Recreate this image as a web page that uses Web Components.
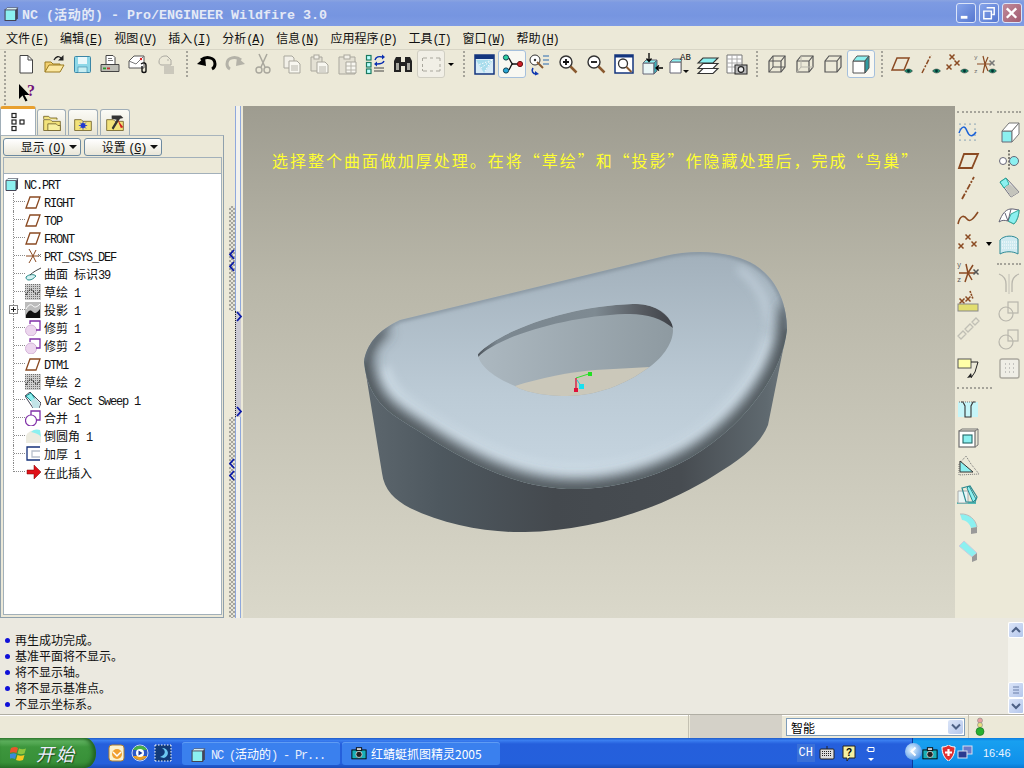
<!DOCTYPE html>
<html lang="zh-CN">
<head>
<meta charset="utf-8">
<title>NC (活动的) - Pro/ENGINEER Wildfire 3.0</title>
<style>
  html, body { margin: 0; padding: 0; background: #ece9d8; overflow: hidden; }
  body { font: 12px "Liberation Mono", "Noto Sans CJK SC", monospace; color: #000; }
</style>
</head>
<body>
<pe-app></pe-app>
<script>
const BR = "#8a4a22"; // datum brown
const CY = "#8cf0f0"; // part cyan
const eye = `<path d="M14.500 19c2-2.600 6-2.600 8 0c-2 2.600-6 2.600-8 0z" fill="#1d8a6a" stroke="#444" stroke-width=".6"/><circle cx="18.500" cy="19" r="1.400" fill="#033"/>`;
const xm = (x, y, c = BR) => `<path d="M${x - 2.500} ${y - 2.500}l5 5m0-5l-5 5" stroke="${c}" stroke-width="1.500" fill="none"/>`;
const lens = (inner = "") => `<circle cx="10" cy="10" r="6" fill="#fff" stroke="#333" stroke-width="1.400"/>${inner}<path d="M14.500 14.500l6 6" stroke="#8a5a30" stroke-width="2.500"/>`;
const cube = (s, d = "") => `<path d="M4 9l4-5h12v11l-4 5H4z" fill="none" stroke="${s}" stroke-width="1.200"/><path d="M4 9h12v11M16 9l4-5" fill="none" stroke="${s}" stroke-width="1.200"/>${d}`;

const ICONS = {
  new: `<path d="M6 3.500h8l4.500 4.500v13H6z" fill="#fff" stroke="#444"/><path d="M14 3.500V8h4.500" fill="none" stroke="#444"/>`,
  open: `<path d="M3 20V10h6l2 2h7v2" fill="#f2d070" stroke="#9a7a20"/><path d="M3 20l4-7h15l-4 7z" fill="#fbe7a0" stroke="#9a7a20"/><path d="M12 8c2-4 5-4 7-2" fill="none" stroke="#222" stroke-width="1.300"/><path d="M21.500 3v5.500H16z" fill="#222"/>`,
  save: `<rect x="4.500" y="4.500" width="16" height="16" rx="1" fill="#8fd8e8" stroke="#3b86a6"/><rect x="8" y="5" width="9" height="7" fill="#eaf8fb"/><rect x="8" y="15" width="9" height="5.500" fill="#c8eef2" stroke="#3b86a6" stroke-width=".6"/>`,
  print: `<path d="M8 12V3.500h7l2 2V12" fill="#fff" stroke="#444"/><path d="M10 6.500h4M10 8.500h5" stroke="#777"/><path d="M3 12.500h18v7H3z" fill="#bdbdb5" stroke="#444"/><rect x="5" y="15.500" width="3" height="1.800" fill="#2a9a2a"/><rect x="9" y="15.500" width="3" height="1.800" fill="#c03030"/>`,
  mail: `<path d="M3 9l5-5h10v12H3z" fill="#fff" stroke="#555"/><path d="M3 9l7 3 8-8" fill="none" stroke="#777"/><circle cx="15" cy="7" r="1.200" fill="#d22"/><path d="M15 12c3-2 5-1 5 1v6c0 2-4 2-4 0v-5" fill="none" stroke="#111" stroke-width="1.400"/>`,
  maildis: `<path d="M5 10c0-4 3-6 6-6h2l4 4v5H8c-2 0-3-1-3-3z" fill="none" stroke="#aaa8a0"/><circle cx="14" cy="8" r="1" fill="#c9c6ba"/><path d="M10 16h10M10 20h10" stroke="#aaa8a0" stroke-width="3"/><path d="M10 16h10M10 20h10" stroke="#ece9d8"/>`,
  undo: `<path d="M6 8c5-4 14-3 14 4 0 2-1 4-3 5" fill="none" stroke="#000" stroke-width="3"/><path d="M2 12l9 2-1-9z" fill="#000"/>`,
  redo: `<path d="M18 8c-5-4-14-3-14 4 0 2 1 4 3 5" fill="none" stroke="#b4b2a8" stroke-width="3"/><path d="M22 12l-9 2 1-9z" fill="#b4b2a8"/>`,
  cut: `<path d="M8 2l6 13M16 2l-6 13" stroke="#a9a79d" stroke-width="1.500"/><circle cx="8" cy="18" r="3" fill="none" stroke="#a9a79d" stroke-width="1.400"/><circle cx="16" cy="18" r="3" fill="none" stroke="#a9a79d" stroke-width="1.400"/>`,
  copy: `<path d="M5 4h8l2 2v10H5z" fill="#f2f0e8" stroke="#a9a79d"/><path d="M10 9h8l3 3v9H10z" fill="#f8f7f0" stroke="#a9a79d"/><path d="M12 14h7M12 16h7M12 18h7" stroke="#b8b6ac"/>`,
  paste: `<path d="M4 5h11v14H4z" fill="#e4e1d4" stroke="#a9a79d"/><rect x="7" y="3" width="5" height="4" fill="#f2f0e8" stroke="#a9a79d"/><path d="M10 10h8l3 3v8H10z" fill="#f8f7f0" stroke="#a9a79d"/><path d="M12 15h7M12 17h7M12 19h7" stroke="#b8b6ac"/>`,
  pastesp: `<path d="M4 5h16v17H4z" fill="#e4e1d4" stroke="#a9a79d"/><rect x="9" y="3" width="6" height="4" fill="#f2f0e8" stroke="#a9a79d"/><path d="M11 10h10v11H11z" fill="#f8f7f0" stroke="#a9a79d"/><path d="M11 14h10M11 18h10M16 10v11" stroke="#b8b6ac"/>`,
  regen: `<g fill="#bff" stroke="#1c7a60" stroke-width="1.200"><rect x="3.500" y="3.500" width="4.500" height="4.500"/><rect x="3.500" y="10.500" width="4.500" height="4.500"/><rect x="3.500" y="17" width="4.500" height="4.500"/></g><path d="M12 8c1-3 4-4 7-3" fill="none" stroke="#0a2fb0" stroke-width="1.400"/><path d="M19 2.500l3 2.500-3 2.500z" fill="#0a2fb0"/><path d="M21 9c-1 3-4 3-7 3" fill="none" stroke="#0a2fb0" stroke-width="1.400"/><path d="M14 9.500l-3 2.500 3 2.500z" fill="#0a2fb0"/><path d="M11 16h10M11 19h10" stroke="#444"/>`,
  find: `<path d="M3 9l2-4h5v5h4V5h5l2 4v11h-7v-6h-4v6H3z" fill="#222"/><path d="M5 11h3v7H5zM16 11h3v7h-3z" fill="#a8a8a0"/>`,
  select: `<path d="M4 6h4M11 6h3M17 6h4M21 6v3M21 12v3M21 17v2M4 19h4M11 19h3M17 19h4M3.500 6v3M3.500 12v3M3.500 17v2" stroke="#a9a79d" fill="none"/>`,
  repaint: `<rect x="3" y="3" width="19" height="19" fill="#d8ecf8" stroke="#13357e" stroke-width="1.500"/><rect x="3" y="3" width="19" height="4" fill="#13357e"/><path d="M4 8h17L12 21z" fill="#a8dcec"/><path d="M20 8L9 16M20 8l-7 11M20 8L6 13" stroke="#fff" stroke-dasharray="1.500 1.500" fill="none"/>`,
  axis: `<path d="M7 5.500c4 0 3 6.500 6 6.500c-3 0-2 6.500-6 6.500M13 12h7" fill="none" stroke="#111" stroke-width="1.300"/><circle cx="6" cy="5.500" r="2.600" fill="#2fd0a0" stroke="#145"/><circle cx="6" cy="18.500" r="2.600" fill="#2aa8d8" stroke="#145"/><circle cx="20" cy="12" r="2.600" fill="#d02028" stroke="#611"/>`,
  spin: `<circle cx="7" cy="8" r="5" fill="#fff" stroke="#333"/><circle cx="7" cy="8" r="1.200" fill="#333"/><path d="M9 10l6 6" stroke="#8a5a30" stroke-width="2"/><path d="M15 4h6M15 8h6M15 12h6" stroke="#2a6ab0"/><path d="M5 16c-2 3 0 6 3 6" fill="none" stroke="#1038b0" stroke-width="1.600"/><path d="M7 19l4 3-4 1.500z" fill="#1038b0"/>`,
  zoomin: lens(`<path d="M7 10h6M10 7v6" stroke="#111" stroke-width="1.800"/>`),
  zoomout: lens(`<path d="M7 10h6" stroke="#111" stroke-width="1.800"/>`),
  refit: `<rect x="3" y="3" width="18" height="18" fill="#fff" stroke="#13357e" stroke-width="1.500"/><rect x="3" y="3" width="18" height="2.500" fill="#13357e"/><circle cx="11" cy="11.500" r="4.500" fill="#fff" stroke="#333" stroke-width="1.300"/><path d="M14.500 15l5 5" stroke="#8a5a30" stroke-width="2"/>`,
  orient: `<path d="M3 11h11v11H3z" fill="#eaf6f6" stroke="#667"/><path d="M3 11l3-3h11l-3 3z" fill="${CY}" stroke="#667"/><path d="M14 11l3-3v11l-3 3z" fill="#3ab0b8" stroke="#667"/><path d="M9 1v8M6.500 6.500L9 9.500l2.500-3" fill="none" stroke="#000" stroke-width="1.300"/><path d="M23 16h-7M19 13.500L16 16l3 2.500" fill="none" stroke="#000" stroke-width="1.300"/>`,
  views: `<path d="M2 10h11v11H2z" fill="#fff" stroke="#667"/><path d="M2 10l3-3h9l-1 3z" fill="${CY}" stroke="#667"/><path d="M13 10l1-3v11l-1 3z" fill="#8a8a82"/><text x="12" y="8" font-family="Liberation Mono" font-size="9" fill="#111">AB</text><path d="M15 18h6l-3 3z" fill="#111"/>`,
  layers: `<g stroke="#333" stroke-width="1.100"><path d="M7 16.500h15l-5 5H2z" fill="#fff"/><path d="M7 11.500h15l-5 5H2z" fill="#fff"/><path d="M7 6h15l-5 5H2z" fill="${CY}"/></g>`,
  image: `<path d="M3 3h15v18H3z" fill="#fff" stroke="#777"/><path d="M3 7h15M3 11h15M3 15h15M8 3v18M13 3v18" stroke="#aaa"/><rect x="11" y="13" width="12" height="9" fill="#bbb" stroke="#222"/><circle cx="17" cy="17.500" r="2.800" fill="#eee" stroke="#222" stroke-width="1.200"/>`,
  wire: cube("#555", `<path d="M8 4v11h12M8 15l-4 5" fill="none" stroke="#555"/>`),
  hidden: cube("#555", `<path d="M8 4v11h12M8 15l-4 5" fill="none" stroke="#b8b6ac"/>`),
  nohidden: cube("#555"),
  shaded: `<path d="M4 9h12v12H4z" fill="#fff" stroke="#555"/><path d="M4 9l4-5h12l-4 5z" fill="${CY}" stroke="#555"/><path d="M16 9l4-5v12l-4 5z" fill="#2f9aa0" stroke="#555"/>`,
  planeeye: `<path d="M2 18L7 6h12l-5 12z" fill="none" stroke="${BR}" stroke-width="1.500"/>${eye}`,
  axiseye: `<path d="M4 21L13 3" stroke="${BR}" stroke-width="1.500" stroke-dasharray="5 1.500 2 1.500"/>${eye}`,
  pointeye: xm(6, 5) + xm(3, 15) + xm(11, 11) + eye,
  csyseye: `<path d="M3 12h14M9 4l2 8-2 9M14 5l-3 7 3 7" stroke="${BR}" stroke-width="1.200" fill="none"/><text x="0" y="7" font-size="6" font-family="Liberation Mono" fill="#666">y</text><text x="0" y="21" font-size="6" font-family="Liberation Mono" fill="#666">z</text>${xm(18, 11, "#777")}${eye}`,
  help: `<path d="M5 4v15l3.500-3.500 3 6 2-1-3-5.500h5z" fill="#000"/><text x="13" y="16" font-family="Liberation Serif" font-weight="700" font-size="16" fill="#70107a">?</text>`,

  sketchfit: `<g fill="#15508c"><circle cx="4" cy="4" r=".6"/><circle cx="9" cy="4" r=".6"/><circle cx="14" cy="4" r=".6"/><circle cx="19" cy="4" r=".6"/><circle cx="4" cy="20" r=".6"/><circle cx="9" cy="20" r=".6"/><circle cx="14" cy="20" r=".6"/><circle cx="19" cy="20" r=".6"/><circle cx="4" cy="9" r=".6"/><circle cx="19" cy="9" r=".6"/><circle cx="4" cy="15" r=".6"/><circle cx="19" cy="15" r=".6"/></g><path d="M3 13c3-8 6-7 8-2s5 7 9 1" fill="none" stroke="#1b62d8" stroke-width="1.500"/>`,
  extrude: `<path d="M5 11h10v11H5z" fill="${CY}" stroke="#667"/><path d="M5 11l7-8h10L15 11z" fill="#fff" stroke="#777"/><path d="M15 11l7-8v11l-7 8z" fill="#fff" stroke="#777"/>`,
  plane: `<path d="M3 20l5-14h14l-6 14z" fill="none" stroke="${BR}" stroke-width="1.800"/>`,
  revolve: `<path d="M12 2v20" stroke="#111" stroke-dasharray="2 1.500"/><circle cx="6" cy="13" r="3.500" fill="#fff" stroke="#667"/><circle cx="17" cy="13" r="4.500" fill="${CY}" stroke="#667"/>`,
  axisl: `<path d="M6 23L18 1" stroke="${BR}" stroke-width="1.800" stroke-dasharray="6 1.500 2 1.500"/>`,
  sweep: `<path d="M3 6l6-4 13 14-8 5z" fill="#fff" stroke="#667"/><path d="M3 6l6-4 3 6-5 4z" fill="${CY}" stroke="#2a9"/><path d="M8 11l5-3 9 8-8 5z" fill="#c4c4bc"/>`,
  curve: `<path d="M2 20c2-9 6-9 9-5s7-1 11-7" fill="none" stroke="${BR}" stroke-width="1.600"/>`,
  blend: `<path d="M2 18c3-8 7-14 14-13l6 1c0 5-2 11-5 14l-6-3c-4-1-6-1-9 1z" fill="#fff" stroke="#667"/><path d="M11 17l3-7 8-4c0 5-2 11-5 14z" fill="${CY}" stroke="#3a9"/><path d="M8 9l3 8M14 5l-3 12" stroke="#667" fill="none"/>`,
  points: xm(12, 5) + xm(5, 14) + xm(18, 12),
  surface: `<path d="M3 22V8c4-5 14-5 18-1v15c-5-3-13-3-18 0z" fill="#cfeaf0" stroke="#2f8a96"/><path d="M5 10h15M5 13h15M5 16h15" stroke="#fff" stroke-dasharray="1 1"/>`,
  csys: `<path d="M3 13h16M10 4l2 9-3 9M17 5l-5 8 4 7" stroke="${BR}" stroke-width="1.500" fill="none"/><text x="1" y="7" font-size="7" font-family="Liberation Mono" fill="#555">y</text><text x="1" y="22" font-size="7" font-family="Liberation Mono" fill="#555">z</text>${xm(20, 12, "#555")}`,
  mirror: `<path d="M12 2v20" stroke="#c4c2b8"/><path d="M2 2c5 2 7 6 7 10v8M22 2c-5 2-7 6-7 10v8" fill="none" stroke="#b8b6ac" stroke-width="1.300"/>`,
  ptfeat: xm(6, 13) + `<path d="M14 3l3 8" stroke="${BR}" stroke-width="1.600" stroke-dasharray="2 1"/>${xm(12, 11)}<rect x="2" y="16" width="20" height="7" fill="#e2de70" stroke="#888"/>`,
  merge: `<rect x="11" y="2" width="10" height="11" fill="none" stroke="#b8b6ac" stroke-width="1.200"/><circle cx="9" cy="14" r="7" fill="none" stroke="#b8b6ac" stroke-width="1.200"/>`,
  chain: `<path d="M2 20l5-5 3 3-5 5zM9 13l5-5 3 3-5 5zM16 6l4-4 3 3-4 4z" fill="none" stroke="#c0bfb5" stroke-width="1.300"/>`,
  note: `<rect x="2" y="3" width="13" height="9" fill="#ffffa8" stroke="#555"/><path d="M15 6h7l-3 10-4 6" fill="none" stroke="#222"/><path d="M11 22l4-5 1 4z" fill="#222"/>`,
  pattern: `<rect x="3" y="3" width="19" height="19" rx="2" fill="#efeee6" stroke="#aaa89e" stroke-width="1.400"/><path d="M8 8h1M12 8h1M16 8h1M8 12h1M12 12h1M16 12h1M8 16h1M12 16h1M16 16h1" stroke="#999"/>`,
  hole: `<rect x="2" y="4" width="20" height="15" fill="#c6f5f8"/><path d="M5 4h2l2 4v11h6V8l2-4h2" fill="none" stroke="#333" stroke-width="1.100"/><path d="M3 4h18" stroke="#777" stroke-dasharray="1 1"/>`,
  shell: `<rect x="3" y="5" width="16" height="16" fill="#fff" stroke="#777" stroke-width="1.300"/><path d="M3 5l3-2h16l-3 2M22 3v16l-3 2" fill="none" stroke="#777"/><rect x="7" y="9" width="9" height="8" fill="${CY}" stroke="#266" stroke-width="1.100"/>`,
  rib: `<path d="M3 21V10l7-8 5 8 8 10z" fill="none" stroke="#777" stroke-dasharray="1 1"/><path d="M4 18V7l13 11z" fill="${CY}" stroke="#333"/>`,
  draft: `<path d="M1 21h19" stroke="#2aa" stroke-width="1.500"/><path d="M2 9h10v12H2z" fill="#e8f6f6" stroke="#aaa"/><path d="M6 6l8-2 7 11-2 5H10z" fill="none" stroke="#2a8a90" stroke-width="1.200"/><path d="M13 4l7 13-3 3-6-14z" fill="${CY}" stroke="#2a8a90"/>`,
  round: `<path d="M4 4c9-1 16 6 17 13l-6 1c-1-4-5-8-9-8z" fill="${CY}"/><path d="M15 18l6-1v6l-6 1z" fill="#999"/><path d="M4 4c9-1 16 6 17 13" fill="none" stroke="#bbb"/>`,
  chamfer: `<path d="M8 3l13 12-5 4L3 8z" fill="${CY}" stroke="#ccd"/><path d="M16 19l5-4v7l-5 2z" fill="#999"/>`,

  root: `<path d="M1 4.500h10v10H1z" fill="${CY}" stroke="#445" stroke-width="1"/><path d="M11 4.500l2-2v10l-2 2z" fill="#445"/><path d="M1 4.500l2-2h10l-2 2z" fill="#e8ffff" stroke="#445" stroke-width=".6"/>`,
  tplane: `<path d="M1 14L5 3h10l-4 11z" fill="none" stroke="${BR}" stroke-width="1.300"/>`,
  tcsys: `<path d="M1 8h13M4 1l4 7-4 7M11 2L8 8l3 6" stroke="${BR}" fill="none"/><path d="M13 6l3 3m0-3l-3 3" stroke="#777"/>`,
  tsurf: `<path d="M1 11c3-3 8-3 10-1-2 2-4 4-7 4-2 0-3-1-3-3z" fill="#d4f2f2" stroke="#2a8a8a"/><path d="M5 9C8 6 12 4 16 2" fill="none" stroke="#444"/>`,
  tsketch: `<rect width="16" height="16" fill="#cfcfcf"/><path d="M0 .5h16M0 2.500h16M0 4.500h16M0 6.500h16M0 8.500h16M0 10.500h16M0 12.500h16M0 14.500h16" stroke="#6e6e6e" stroke-dasharray="1 1"/><path d="M1 11c3-6 5-7 8-3s4 2 6-2" fill="none" stroke="#111" stroke-dasharray="1.500 1"/>`,
  tproj: `<rect width="16" height="16" fill="#bbb"/><path d="M1 13c3-6 5-5 7-3s4 1 7-3v9H1z" fill="#111"/><path d="M1 7c3-5 5-5 7-3s4 1 7-2" fill="none" stroke="#fff"/>`,
  ttrim: `<circle cx="6" cy="10.500" r="5.500" fill="#ecd6ee" stroke="#d4b4d8"/><path d="M5 4V1h10v9H11" fill="none" stroke="#8030a8" stroke-width="1.300"/>`,
  tsweep: `<path d="M0 4l5-4 11 11-2 5H8z" fill="#fff" stroke="#445"/><path d="M1 4l5-3 4 6-3 3z" fill="${CY}" stroke="#1a8a8a"/><path d="M6 9l4-3 5 5-1 5H8z" fill="#c2e4e8"/>`,
  tmerge: `<circle cx="6" cy="10.500" r="5.500" fill="#fff" stroke="#8030a8" stroke-width="1.200"/><path d="M6 5V1h9v9h-4" fill="none" stroke="#8030a8" stroke-width="1.300"/>`,
  tround: `<path d="M1 15V8c2-5 8-7 14-6l1 7v6z" fill="#ecebe0"/><path d="M6 4c3-3 6-3 9-2l1 7c-2-3-6-4-10-5z" fill="${CY}"/>`,
  tthick: `<path d="M15 1H2v13h13" fill="none" stroke="#14307a" stroke-width="1.300"/><path d="M15 5H7v6h8" fill="none" stroke="#b8c0cc" stroke-width="1.300"/>`,
  tinsert: `<path d="M2 6h7V1l7 7-7 7v-5H2z" fill="#e01018" stroke="#700" stroke-width=".5"/>`,
};

function icon(name, size = 24, box = 24) {
  return `<svg width="${size}" height="${size}" viewBox="0 0 ${box} ${box}" style="display:block">${ICONS[name] || ""}</svg>`;
}

// latin in a squeezed run so it keeps the 6px cell next to 12px CJK
function mixed(text) {
  return text.replace(/[\x20-\x7e]+/g, (m) => `<span class="l">${m.replace(/&/g, "&amp;")}</span>`);
}
const MIXED_CSS = `.l { font: 12px "Liberation Mono", monospace; letter-spacing: -1.200px; white-space: pre; }`;

class Base extends HTMLElement {
  constructor() {
    super();
    this.attachShadow({ mode: "open" });
  }
}

class PeApp extends Base {
  connectedCallback() {
    this.shadowRoot.innerHTML = `
      <style>
        :host { display: flex; flex-direction: column; width: 1024px; height: 768px; overflow: hidden; background: #ece9d8; }
        .main { display: flex; height: 512px; }
      </style>
      <pe-titlebar></pe-titlebar>
      <pe-menubar></pe-menubar>
      <pe-toolbar></pe-toolbar>
      <div class="main">
        <pe-sidebar></pe-sidebar>
        <pe-sash></pe-sash>
        <pe-canvas></pe-canvas>
        <pe-righttools></pe-righttools>
      </div>
      <pe-messages></pe-messages>
      <pe-status></pe-status>
      <pe-taskbar></pe-taskbar>`;
  }
}

class PeTitlebar extends Base {
  connectedCallback() {
    const btn = (cls, svg) => `<div class="wb ${cls}"><svg width="19" height="19" viewBox="0 0 19 19">${svg}</svg></div>`;
    this.shadowRoot.innerHTML = `
      <style>
        :host { display: flex; align-items: center; height: 26px; box-sizing: border-box; padding: 0 2px 0 4px;
          background: linear-gradient(#8aa3e0 0, #7d9ae2 10%, #7695e0 60%, #7f9ce4 100%); }
        .ic { margin-right: 2px; }
        .t { flex: 1; color: #e4e9f6; font: bold 13.333px "Liberation Mono", monospace; white-space: pre; }
        .t b { font: bold 13px "Noto Sans CJK SC", sans-serif; letter-spacing: .7px; }
        .wb { width: 20px; height: 20px; border-radius: 3px; border: 1px solid #dbe4f8; box-sizing: border-box; margin-left: 3px; display: flex; }
        .min, .max { background: linear-gradient(135deg, #86a4ea, #5577d0); }
        .close { background: linear-gradient(135deg, #c08a9a, #a25c70); }
      </style>
      <div class="ic">${icon("root", 16, 15)}</div>
      <div class="t">NC (<b>活动的</b>) - Pro/ENGINEER Wildfire 3.0</div>
      ${btn("min", `<rect x="4" y="12" width="7" height="3" fill="#fff"/>`)}
      ${btn("max", `<path d="M7 3.500h8v7h-2M4 7h8v8H4z" fill="none" stroke="#fff" stroke-width="1.500"/>`)}
      ${btn("close", `<path d="M4 4l10 10M14 4L4 14" stroke="#fff" stroke-width="2.500"/>`)}`;
  }
}

class PeMenubar extends Base {
  connectedCallback() {
    const items = [["文件", "F"], ["编辑", "E"], ["视图", "V"], ["插入", "I"], ["分析", "A"], ["信息", "N"], ["应用程序", "P"], ["工具", "T"], ["窗口", "W"], ["帮助", "H"]];
    this.shadowRoot.innerHTML = `
      <style>
        :host { display: flex; gap: 12px; height: 24px; box-sizing: border-box; padding: 0 6px; align-items: center;
          background: #ece9d8; border-bottom: 1px solid #d8d5c5; font: 12px "Noto Sans CJK SC", sans-serif; color: #111; }
        u { text-decoration: underline; }
        ${MIXED_CSS}
      </style>
      ${items.map(([t, k]) => `<span>${t}<span class="l">(<u>${k}</u>)</span></span>`).join("")}`;
  }
}

class ToolBtn extends Base {
  connectedCallback() {
    const name = this.getAttribute("icon");
    this.shadowRoot.innerHTML = `
      <style>
        :host { display: flex; width: 28px; height: 28px; flex: none; align-items: center; justify-content: center; box-sizing: border-box; }
        :host([active]) { background: #f8f8f2; border: 1px solid #a5c0dc; border-radius: 3px; }
        :host([ghost]) { background: #f1efe6; border: 1px solid #d0cec2; border-radius: 3px; }
      </style>${icon(name)}`;
  }
}

class ToolGrip extends Base {
  connectedCallback() {
    this.shadowRoot.innerHTML = `
      <style>
        :host { display: block; flex: none; width: 13px; height: 28px; }
        i { display: block; width: 0; height: 26px; margin: 1px 0 0 6px; border-left: 2px dotted #a6a49a; }
        :host([flat]) { width: auto; height: 12px; }
        :host([flat]) i { width: auto; height: 0; margin: 5px 2px 0; border-left: 0; border-top: 2px dotted #a6a49a; }
      </style><i></i>`;
  }
}

class PeToolbar extends Base {
  connectedCallback() {
    const row1 = "new open save print mail maildis | undo redo cut copy paste pastesp regen find select* | repaint axis! spin zoomin zoomout refit orient views layers image | wire hidden nohidden shaded! | planeeye axiseye pointeye csyseye".split(" ");
    const html = row1.map((n) => {
      if (n === "|") return "<tool-grip></tool-grip>";
      if (n === "select*") return `<tool-btn icon="select" ghost></tool-btn><span class="drop"></span>`;
      if (n.endsWith("!")) return `<tool-btn icon="${n.slice(0, -1)}" active></tool-btn>`;
      return `<tool-btn icon="${n}"></tool-btn>`;
    }).join("");
    this.shadowRoot.innerHTML = `
      <style>
        :host { display: block; height: 56px; background: #ece9d8; }
        .row { display: flex; height: 28px; align-items: center; }
        .edge { width: 12px; flex: none; height: 28px; }
        .edge tool-grip { margin-left: -2px; }
        .drop { flex: none; width: 12px; height: 28px; display: flex; align-items: center; justify-content: center; }
        .drop::before { content: ""; border: 3px solid transparent; border-top: 3px solid #000; border-bottom: 0; }
      </style>
      <div class="row"><div class="edge"><tool-grip></tool-grip></div>${html}</div>
      <div class="row"><div class="edge"><tool-grip></tool-grip></div><tool-btn icon="help"></tool-btn></div>`;
  }
}

class TreeRow extends Base {
  connectedCallback() {
    const root = this.hasAttribute("root");
    const label = this.getAttribute("label");
    this.shadowRoot.innerHTML = `
      <style>
        :host { display: flex; height: 18px; align-items: center; font: 12px "Noto Sans CJK SC", sans-serif; color: #111; white-space: pre; }
        ${MIXED_CSS}
        .stem { flex: none; width: 11px; height: 18px; margin-left: 9px; border-left: 1px dotted #8a8a8a; position: relative; }
        :host([last]) .stem { height: 9px; align-self: flex-start; }
        .h { height: 9px; border-bottom: 1px dotted #8a8a8a; box-sizing: border-box; }
        .plus { position: absolute; left: -5px; top: 4px; width: 9px; height: 9px; box-sizing: border-box; border: 1px solid #888; background: #fff;
          background-image: linear-gradient(#222, #222), linear-gradient(#222, #222); background-size: 5px 1px, 1px 5px; background-position: center; background-repeat: no-repeat; }
        .ic { flex: none; width: 16px; height: 16px; margin-right: 3px; }
        .rt { margin: 0 3px 0 1px; }
      </style>
      ${root ? "" : `<div class="stem"><div class="h"></div>${this.hasAttribute("plus") ? '<div class="plus"></div>' : ""}</div>`}
      <div class="ic ${root ? "rt" : ""}">${icon(this.getAttribute("icon"), 16, 16)}</div>
      <span>${mixed(label)}</span>`;
  }
}

class PeSidebar extends Base {
  connectedCallback() {
    const tab = (svg, cls, w) => `<div class="tab ${cls}" style="width:${w}px">${svg}</div>`;
    const folder = (extra) => `<svg width="20" height="20" viewBox="0 0 24 24"><path d="M2 21V8h8l2 2h10v11z" fill="#f2e27a" stroke="#70622a"/>${extra}</svg>`;
    const rows = [
      ["root", "NC.PRT", "root"], ["tplane", "RIGHT"], ["tplane", "TOP"], ["tplane", "FRONT"], ["tcsys", "PRT_CSYS_DEF"],
      ["tsurf", "曲面 标识39"], ["tsketch", "草绘 1"], ["tproj", "投影 1", "plus"], ["ttrim", "修剪 1"], ["ttrim", "修剪 2"],
      ["tplane", "DTM1"], ["tsketch", "草绘 2"], ["tsweep", "Var Sect Sweep 1"], ["tmerge", "合并 1"], ["tround", "倒圆角 1"],
      ["tthick", "加厚 1"], ["tinsert", "在此插入", "last"],
    ];
    this.shadowRoot.innerHTML = `
      <style>
        :host { display: flex; flex-direction: column; flex: none; width: 224px; height: 512px; box-sizing: border-box; font: 12px "Noto Sans CJK SC", sans-serif; }
        ${MIXED_CSS}
        .tabs { display: flex; height: 29px; align-items: flex-end; gap: 2px; }
        .tab { height: 26px; box-sizing: border-box; border: 1px solid #a0aeb8; border-bottom: 0; border-radius: 3px 3px 0 0;
          background: linear-gradient(#fbfbf6, #e7e4d4); display: flex; align-items: center; justify-content: center; }
        .tab.on { height: 29px; background: #fff; border-top: 3px solid #e8a030; margin-right: -1px; }
        .box { flex: 1; display: flex; flex-direction: column; min-height: 0; border: 1px solid #8fa0ac; border-top-color: #a8b4bc; padding: 2px 1px 2px 2px; }
        .btns { display: flex; gap: 3px; height: 18px; margin-bottom: 1px; }
        .b { width: 78px; box-sizing: border-box; border: 1px solid #6d8aa0; border-radius: 3px; background: linear-gradient(#fff, #e9e6d8);
          display: flex; align-items: center; justify-content: center; gap: 4px; padding-left: 14px; font-size: 12px; color: #111; }
        .b::after { content: ""; border: 4px solid transparent; border-top: 4px solid #111; border-bottom: 0; }
        .head { height: 15px; border: 1px solid #a2b0ba; border-bottom: 0; background: #ece9d8; }
        .tree { flex: 1; background: #fff; border: 1px solid #a2b0ba; padding-top: 1px; }
      </style>
      <div class="tabs">
        ${tab(`<svg width="16" height="20" viewBox="0 0 16 20"><g fill="#fff" stroke="#222" stroke-width="1.200"><rect x="2" y="1.500" width="4" height="4"/><rect x="2" y="8" width="4" height="4"/><rect x="10" y="8" width="4" height="4"/><rect x="2" y="14.500" width="4" height="4"/></g></svg>`, "on", 36)}
        ${tab(folder(`<path d="M2 7V4h6l2 2h8v2" fill="#f2e27a" stroke="#70622a"/><path d="M7 13h10l2 2h3v6H7z" fill="#f8f0a0" stroke="#70622a"/>`), "", 29)}
        ${tab(folder(`<circle cx="12" cy="15" r="3" fill="#2038d0"/><path d="M12 10v10M7 15h10M8.500 11.500l7 7m0-7l-7 7" stroke="#2038d0"/>`), "", 30)}
        ${tab(folder(`<path d="M8 3h11l3 3-4 1-8 13-2-2 6-10-6-1z" fill="#333"/><path d="M15 8l7 9-3 1z" fill="#d02020"/>`), "", 30)}
      </div>
      <div class="box">
        <div class="btns">
          <div class="b"><span>显示 <span class="l">(<u>O</u>)</span></span></div>
          <div class="b"><span>设置 <span class="l">(<u>G</u>)</span></span></div>
        </div>
        <div class="head"></div>
        <div class="tree">
          ${rows.map((r) => `<tree-row icon="${r[0]}" label="${r[1]}" ${r[2] || ""}></tree-row>`).join("")}
        </div>
      </div>`;
  }
}

class PeSash extends Base {
  connectedCallback() {
    const chev = (d) => `<svg class="c" width="8" height="11" viewBox="0 0 8 11"><path d="${d === "l" ? "M6 1L2 5.500 6 10" : "M2 1l4 4.500L2 10"}" fill="none" stroke="#0a1aa8" stroke-width="1.800"/></svg>`;
    this.shadowRoot.innerHTML = `
      <style>
        :host { display: flex; flex: none; width: 19px; height: 512px; background: #ece9d8; box-sizing: border-box; padding-left: 4px; }
        .a { width: 7px; display: flex; flex-direction: column; align-items: center; }
        .b { width: 6px; display: flex; flex-direction: column; align-items: center; box-sizing: border-box; border-left: 1px solid #8fa8dc; border-right: 1px solid #8fa8dc; background: #f2f2ee; }
        .sp { flex: none; width: 100%; }
        .dith { width: 6px; display: flex; flex-direction: column; align-items: center; gap: 1px; flex: none;
          background: repeating-conic-gradient(#a6a59c 0 25%, #e6e4d8 0 50%) 0 0 / 4px 4px; }
        .mid { flex: none; width: 6px; height: 106px; background: #cbcad4; display: flex; flex-direction: column; align-items: center; justify-content: space-between; border-left: 1px dotted #222; box-sizing: border-box; }
        .c { flex: none; display: block; }
      </style>
      <div class="a">
        <div class="sp" style="height:100px"></div>
        <div class="dith" style="height:105px"><div class="sp" style="height:42px"></div>${chev("l")}${chev("l")}</div>
        <div class="sp" style="height:106px"></div>
        <div class="dith" style="height:201px"><div class="sp" style="height:40px"></div>${chev("l")}${chev("l")}</div>
      </div>
      <div class="b">
        <div class="sp" style="height:205px"></div>
        <div class="mid">${chev("r")}${chev("r")}</div>
      </div>`;
  }
}

class PeCanvas extends Base {
  connectedCallback() {
    const top = "M364 362C366 345 378 330 400 320L665 256C690 250 720 250 745 260C770 270 787 295 787 330";
    const low = "C782 375 745 425 690 458C650 480 610 489 575 489C520 489 470 465 420 432C395 416 368 405 364 362";
    const cap = `${top}${low}Z`;
    const hole = "M478 354C500 330 570 306 633 304C655 303 673 315 673 330C673 345 660 360 648 368C625 385 595 396 567 396C540 396 520 390 515 386C495 378 478 365 478 354Z";
    this.shadowRoot.innerHTML = `
      <style>
        :host { display: block; position: relative; flex: none; width: 712px; height: 512px; overflow: hidden; background: linear-gradient(#9e9c90, #b9b7a9 35%, #dad8ca); }
        svg { position: absolute; left: 0; top: 0; }
        .note { position: relative; padding: 44px 0 0 29px; font: 16px "Noto Sans CJK SC", sans-serif; line-height: 20px; color: #ffff30; white-space: pre; letter-spacing: 1.980px; }
      </style>
      <svg width="712" height="512" viewBox="243 106 712 512">
        <defs>
          <linearGradient id="face" x1="0" y1="252" x2="0" y2="490" gradientUnits="userSpaceOnUse">
            <stop offset="0" stop-color="#a2b0bb"/><stop offset=".6" stop-color="#bccbd6"/><stop offset="1" stop-color="#c8d7e2"/>
          </linearGradient>
          <linearGradient id="wall" x1="364" y1="0" x2="787" y2="0" gradientUnits="userSpaceOnUse">
            <stop offset="0" stop-color="#5d676e"/><stop offset=".18" stop-color="#4e585f"/><stop offset=".45" stop-color="#44494e"/><stop offset=".75" stop-color="#474c51"/><stop offset=".95" stop-color="#5f696f"/><stop offset="1" stop-color="#6c767c"/>
          </linearGradient>
          <linearGradient id="inner" x1="478" y1="0" x2="673" y2="0" gradientUnits="userSpaceOnUse">
            <stop offset="0" stop-color="#acb8c0"/><stop offset="1" stop-color="#8e9aa1"/>
          </linearGradient>
          <linearGradient id="band" x1="478" y1="0" x2="673" y2="0" gradientUnits="userSpaceOnUse">
            <stop offset="0" stop-color="#4e555c"/><stop offset=".1" stop-color="#7b8790"/><stop offset=".6" stop-color="#7e8a92"/><stop offset=".85" stop-color="#55595f"/><stop offset="1" stop-color="#3f4248"/>
          </linearGradient>
          <clipPath id="capc"><path d="${cap}"/></clipPath>
          <clipPath id="holec"><path d="${hole}"/></clipPath>
          <filter id="b7" x="-20%" y="-20%" width="140%" height="140%"><feGaussianBlur stdDeviation="7"/></filter>
          <filter id="b5" x="-20%" y="-20%" width="140%" height="140%"><feGaussianBlur stdDeviation="5"/></filter>
          <filter id="b2" x="-20%" y="-20%" width="140%" height="140%"><feGaussianBlur stdDeviation="2"/></filter>
        </defs>
        <path d="M364 362L382 473C384 490 395 500 410 508C445 525 490 533 525 532C590 531 660 510 715 475C740 460 760 445 768 425L787 330Z" fill="url(#wall)"/>
        <path d="${cap}" fill="url(#face)"/>
        <g clip-path="url(#capc)" fill="none">
          <path d="M771 335C760 375 725 420 680 446C640 466 610 472 575 472C525 472 478 450 428 418C406 404 388 392 384 368" stroke="#d3e1eb" stroke-width="9" filter="url(#b5)"/>
          <path d="M738 268C758 282 770 305 771 335" stroke="#cbd9e4" stroke-width="6" opacity=".8" filter="url(#b5)"/>
          <path d="M790 305L787 330${low}C362 350 370 335 385 326" stroke="#3f464b" stroke-width="17" filter="url(#b7)"/>
          <path d="${top}" stroke="#76838e" stroke-width="3" filter="url(#b2)"/>
        </g>
        <path d="${hole}" fill="url(#inner)"/>
        <g clip-path="url(#holec)">
          <path d="M478 354C500 330 570 306 633 304C655 303 670 315 674 329C662 318 645 313 625 314C570 316 500 335 478 357Z" fill="url(#band)"/>
          <path d="M515 386C540 378 570 372 595 370L650 367L640 400H510Z" fill="#cbc8ba"/>
        </g>
        <path d="M576 378L590 373.500" stroke="#33dd33" stroke-width="1"/>
        <path d="M576 378V390" stroke="#d81038" stroke-width="1.300"/>
        <path d="M577 380L581 386" stroke="#20c8d8" stroke-width="1"/>
        <rect x="588" y="372" width="4" height="4" fill="#22e022"/>
        <rect x="579" y="384" width="5" height="5" fill="#18e0f0"/>
        <rect x="574" y="388" width="4" height="4" fill="#e01038"/>
      </svg>
      <div class="note">选择整个曲面做加厚处理。在将“草绘”和“投影”作隐藏处理后，完成“鸟巢”</div>`;
  }
}

class PeRighttools extends Base {
  connectedCallback() {
    const col = (items) => items.map((n) => {
      if (n === "|") return "<tool-grip flat></tool-grip>";
      if (n === "_") return '<div style="height:12px;flex:none"></div>';
      if (n === "-") return '<div style="height:2px;flex:none"></div>';
      return `<tool-btn icon="${n}"></tool-btn>`;
    }).join("");
    const a = "| sketchfit plane axisl curve points csys ptfeat chain _ note | - hole shell rib draft round chamfer".split(" ");
    const b = "| extrude revolve sweep blend surface | mirror merge merge pattern".split(" ");
    this.shadowRoot.innerHTML = `
      <style>
        :host { display: flex; flex: none; width: 69px; height: 512px; background: #ece9d8; }
        .a, .b { display: flex; flex-direction: column; position: relative; }
        .a { width: 39px; box-sizing: border-box; }
        .a tool-btn { margin-left: -1px; }
        .b { width: 28px; margin-left: 1px; }
        .arr { position: absolute; left: 31px; top: 136px; border: 3px solid transparent; border-top: 4px solid #000; border-bottom: 0; }
      </style>
      <div class="a">${col(a)}<span class="arr"></span></div>
      <div class="b">${col(b)}</div>`;
  }
}

class PeMessages extends Base {
  connectedCallback() {
    const msgs = ["再生成功完成。", "基准平面将不显示。", "将不显示轴。", "将不显示基准点。", "不显示坐标系。"];
    const sb = (d) => `<div class="sb"><svg width="12" height="12" viewBox="0 0 12 12"><path d="${d}" fill="none" stroke="#4d6185" stroke-width="2"/></svg></div>`;
    this.shadowRoot.innerHTML = `
      <style>
        :host { display: flex; height: 96px; box-sizing: border-box; background: #ebe9e0; padding-top: 4px; }
        .list { flex: 1; padding: 10px 0 0 5px; font: 12px/16px "Noto Sans CJK SC", sans-serif; color: #111; }
        .m { display: flex; align-items: center; height: 16px; }
        .m::before { content: ""; width: 5px; height: 5px; border-radius: 50%; background: #1010d8; margin-right: 5px; }
        .bar { width: 16px; display: flex; flex-direction: column; background: #f4f3ec; }
        .sb { height: 16px; flex: none; box-sizing: border-box; border: 1px solid #fff; border-radius: 2px; background: linear-gradient(135deg, #dbe5f8, #b5c7ec); display: flex; align-items: center; justify-content: center; }
        .fill { flex: 1; }
        .th svg path { stroke-width: 1; stroke: #6a7ea8; }
      </style>
      <div class="list">${msgs.map((m) => `<div class="m">${m}</div>`).join("")}</div>
      <div class="bar">
        ${sb("M2 8l4-4 4 4")}
        <div class="fill"></div>
        <div class="th">${sb("M3 3h6M3 6h6M3 9h6")}</div>
        ${sb("M2 4l4 4 4-4")}
      </div>`;
  }
}

class PeStatus extends Base {
  connectedCallback() {
    this.shadowRoot.innerHTML = `
      <style>
        :host { display: flex; height: 24px; box-sizing: border-box; border-top: 1px solid #b0aea4; background: #ece9d8; font: 12px "Noto Sans CJK SC", sans-serif; box-shadow: inset 0 1px 0 #fff; }
        .sp { width: 688px; flex: none; border-right: 1px solid #c4c1b2; }
        .pane { width: 92px; flex: none; background: #d4d1c8; margin-left: 1px; }
        .sel { width: 179px; flex: none; box-sizing: border-box; height: 18px; margin: 3px 0 0 4px; background: #fff; border: 1px solid #7f9db9; display: flex; align-items: center; padding-left: 4px; }
        .sel span { flex: 1; }
        .dd { width: 15px; height: 14px; margin-right: 1px; border-radius: 2px; background: linear-gradient(135deg, #dbe5f8, #b5c7ec); display: flex; align-items: center; justify-content: center; }
        .light { margin-left: 3px; border-left: 1px solid #c4c1b2; padding-left: 6px; padding-top: 2px; }
      </style>
      <div class="sp"></div>
      <div class="pane"></div>
      <div class="sel"><span>智能</span><div class="dd"><svg width="10" height="8" viewBox="0 0 10 8"><path d="M1 1.500l4 4 4-4" fill="none" stroke="#4d6185" stroke-width="2"/></svg></div></div>
      <div class="light"><svg width="10" height="20" viewBox="0 0 10 20"><circle cx="5" cy="3.500" r="2.500" fill="#e8a0a0" stroke="#888" stroke-width=".6"/><circle cx="5" cy="8" r="2.500" fill="#e8e080" stroke="#888" stroke-width=".6"/><circle cx="5" cy="14.500" r="4" fill="#28b030" stroke="#1a6a20" stroke-width=".6"/></svg></div>`;
  }
}

class PeTaskbar extends Base {
  connectedCallback() {
    const flag = `<svg width="18" height="18" viewBox="0 0 18 18"><path d="M1 4c3-1.500 5-1.500 7 0l-1.500 5c-2-1-4-1-7 0z" fill="#e8552c"/><path d="M9 4.500c2.500 1 4.500 1 7 0l-1.500 5c-2.500 1-4.500 1-7 0z" fill="#8ec63f"/><path d="M0 10c3-1 4.500-1 6.500 0L5 15c-2-1-3.500-1-6 0z" fill="#3a8ad8"/><path d="M7.500 11c2.500 1 4 1 7 0L13 16c-2.500 1-4.500 1-7 0z" fill="#f8c820"/></svg>`;
    const camera = `<svg width="16" height="15" viewBox="0 0 18 16"><rect x="1" y="4" width="16" height="10" fill="#18b0b8" stroke="#000"/><rect x="6" y="1.500" width="6" height="3" fill="#ddd" stroke="#000"/><circle cx="9" cy="9" r="3.500" fill="#222" stroke="#ccc"/></svg>`;
    this.shadowRoot.innerHTML = `
      <style>
        :host { display: flex; height: 30px; color: #fff; align-items: stretch; overflow: hidden;
          background: linear-gradient(#1f5cc8 0, #3a7ef0 8%, #255fdc 20%, #2460dc 85%, #1b4db8 100%); font: 12px "Noto Sans CJK SC", sans-serif; }
        ${MIXED_CSS}
        .start { width: 96px; flex: none; box-sizing: border-box; display: flex; align-items: center; gap: 8px; padding-left: 10px; border-radius: 0 12px 12px 0 / 0 16px 16px 0;
          background: linear-gradient(#3e8f3e 0, #5fb25f 10%, #3d963d 30%, #389038 80%, #2d7a2d 100%); box-shadow: inset -3px 0 4px #1f5f1f;
          font: italic 18px "Noto Sans CJK SC", sans-serif; color: #eef; text-shadow: 1px 1px 1px #1d4d1d; letter-spacing: 2px; }
        .quick { display: flex; align-items: center; width: 86px; flex: none; padding-left: 12px; gap: 5px; box-sizing: border-box; }
        .quick svg { flex: none; }
        .task { width: 158px; flex: none; margin: 4px 2px 3px 0; box-sizing: border-box; border-radius: 3px; background: #3a80ee; box-shadow: inset 0 1px 0 #5f9cf4; display: flex; align-items: center; gap: 4px; padding-left: 9px; white-space: pre; overflow: hidden; color: #fff; }
        .task .l { color: #e8eefc; }
        .gap { flex: 1; display: flex; align-items: center; justify-content: flex-end; gap: 7px; padding-right: 3px; }
        .ch { font: 12px "Liberation Mono", monospace; background: #3a70d8; padding: 2px 2px; margin-right: -3px; }
        .tray { width: 112px; flex: none; box-sizing: border-box; display: flex; align-items: center; gap: 1px; padding-left: 9px; position: relative;
          background: linear-gradient(#0c7ce0 0, #18a0f0 10%, #1090ea 85%, #0a78d0); border-left: 1px solid #0c3a9c; }
        .tray .cv { position: absolute; left: -8px; top: 5px; width: 17px; height: 17px; border-radius: 50%; background: radial-gradient(circle at 40% 40%, #e8f6ff, #2a7ee0); display: flex; align-items: center; justify-content: center; }
        .time { font: 11px "Liberation Sans", sans-serif; margin-left: 9px; white-space: pre; color: #eaf4ff; }
      </style>
      <div class="start">${flag}<span>开始</span></div>
      <div class="quick">
        <svg width="18" height="18" viewBox="0 0 18 18"><rect x="1" y="1" width="15" height="16" rx="3" fill="#fbf2d0" stroke="#b08030"/><circle cx="9" cy="10" r="5" fill="#f0a030"/><path d="M5 8l4 4 4-4" fill="none" stroke="#fff" stroke-width="1.500"/></svg>
        <svg width="18" height="18" viewBox="0 0 18 18"><circle cx="9" cy="9" r="8" fill="#2a58c8" stroke="#cfd8f0"/><path d="M2 6a8 8 0 0 1 14 0z" fill="#48b048"/><path d="M2 12a8 8 0 0 0 14 0z" fill="#e8a028"/><circle cx="9" cy="9" r="4" fill="#fff"/><path d="M7.500 6.500l4 2.500-4 2.500z" fill="#1838a0"/></svg>
        <svg width="18" height="18" viewBox="0 0 18 18"><rect x="1" y="1" width="16" height="16" fill="#123a78"/><path d="M1 1h16M1 17h16M1 1v16M17 1v16" stroke="#fff" stroke-dasharray="1.500 1.500"/><path d="M6 13c6-2 6-7 2-9 7 0 8 8 2 10z" fill="#6cc8f0"/></svg>
      </div>
      <div class="task">${icon("root", 16, 15)}<span>${mixed("NC (活动的) - Pr...")}</span></div>
      <div class="task">${camera}<span>红蜻蜓抓图精灵2005</span></div>
      <div class="gap">
        <span class="ch">CH</span>
        <svg width="16" height="14" viewBox="0 0 16 14"><rect x="1" y="3" width="14" height="10" rx="1" fill="#ddd" stroke="#222"/><path d="M3 5.500h10M3 7.500h10M3 9.500h10" stroke="#222" stroke-dasharray="1 1"/><path d="M8 0v3" stroke="#222"/></svg>
        <svg width="15" height="17" viewBox="0 0 15 17"><path d="M1 1h12v12H7l-2 3v-3H1z" fill="#f6f0a0" stroke="#222"/><text x="4" y="11" font-family="Liberation Sans" font-weight="700" font-size="10" fill="#000">?</text></svg>
        <svg width="12" height="18" viewBox="0 0 12 18" style="margin:0 32px 0 1px"><path d="M3 3.500h6v4H3zM1.500 6h2" fill="none" stroke="#fff"/><path d="M3 14h6l-3 3z" fill="#fff"/></svg>
      </div>
      <div class="tray">
        <div class="cv"><svg width="9" height="11" viewBox="0 0 9 11"><path d="M6.500 1.500L2.500 5.500l4 4" fill="none" stroke="#fff" stroke-width="2"/></svg></div>
        ${camera}
        <svg width="15" height="16" viewBox="0 0 15 16" style="margin-left:2px"><path d="M1 2c3 0 5-1 6.500-2C9 1 11 2 14 2c0 6-2 11-6.500 14C3 13 1 8 1 2z" fill="#e03030" stroke="#fff"/><path d="M7.500 4v7M4 7.500h7" stroke="#fff" stroke-width="2.200"/></svg>
        <svg width="16" height="16" viewBox="0 0 16 16"><rect x="6" y="1" width="9" height="8" fill="#6a7ac8" stroke="#d8e0f0"/><rect x="1" y="6" width="9" height="7" fill="#2a3a90" stroke="#d8e0f0"/></svg>
        <span class="time">16:46</span>
      </div>`;
  }
}

customElements.define("tool-btn", ToolBtn);
customElements.define("tool-grip", ToolGrip);
customElements.define("tree-row", TreeRow);
customElements.define("pe-titlebar", PeTitlebar);
customElements.define("pe-menubar", PeMenubar);
customElements.define("pe-toolbar", PeToolbar);
customElements.define("pe-sidebar", PeSidebar);
customElements.define("pe-sash", PeSash);
customElements.define("pe-canvas", PeCanvas);
customElements.define("pe-righttools", PeRighttools);
customElements.define("pe-messages", PeMessages);
customElements.define("pe-status", PeStatus);
customElements.define("pe-taskbar", PeTaskbar);
customElements.define("pe-app", PeApp);
</script>
</body>
</html>
